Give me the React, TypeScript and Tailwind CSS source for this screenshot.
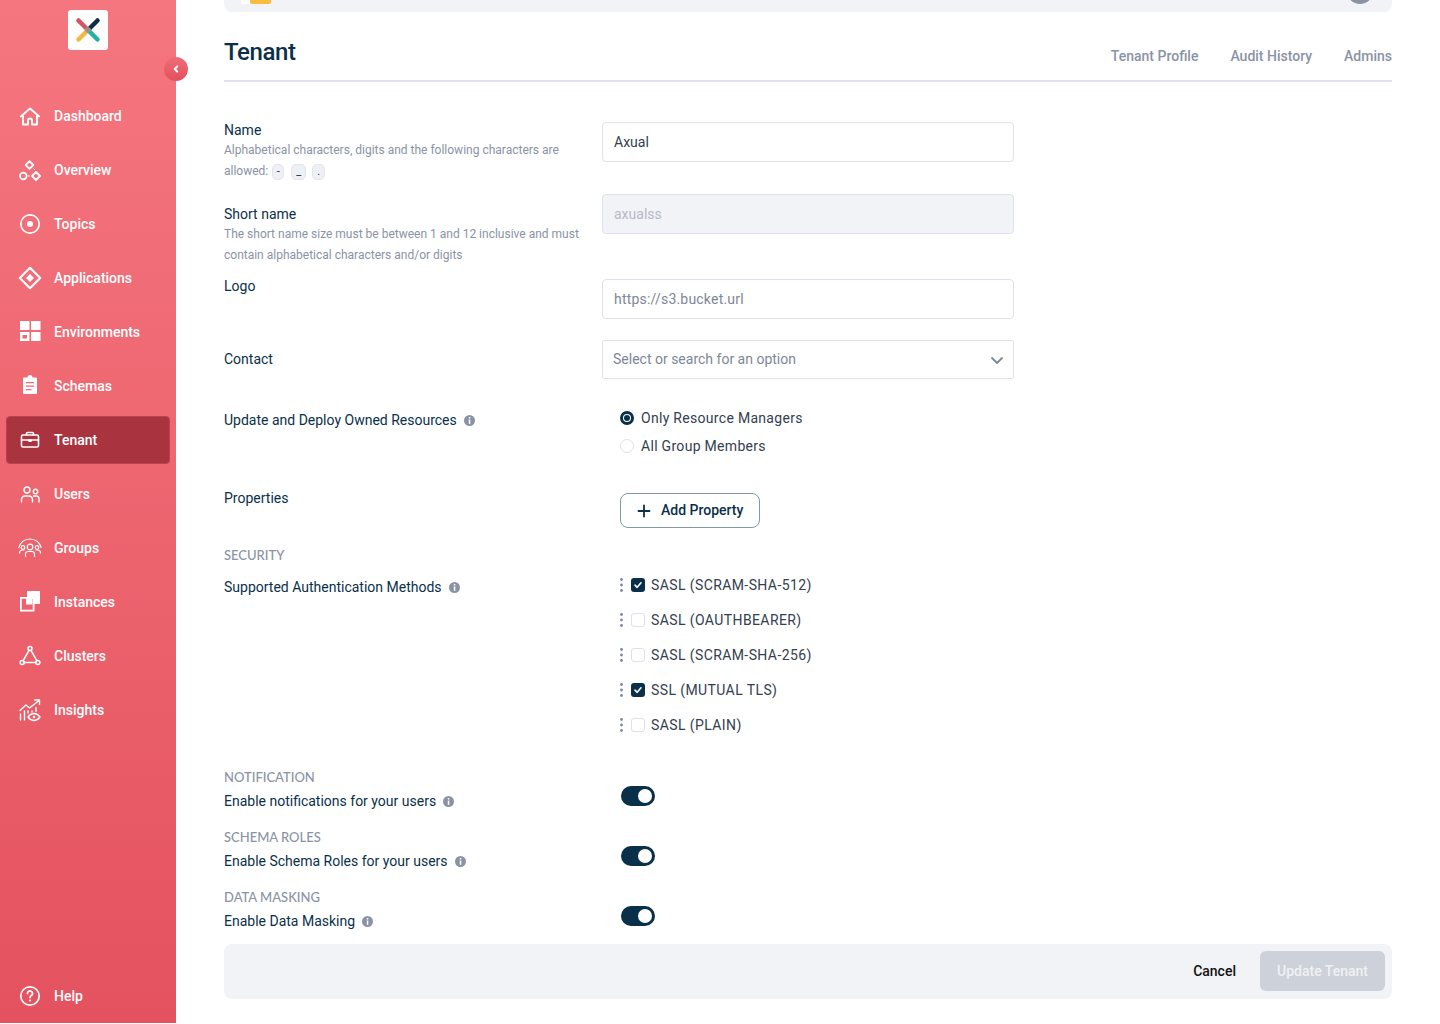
import { ReactNode } from "react"

const Ic = ({ children }: { children: ReactNode }) => (
  <svg width="24" height="24" viewBox="0 0 24 24" fill="none" stroke="white" strokeWidth="1.6" strokeLinecap="round" strokeLinejoin="round">
    {children}
  </svg>
)

const navItems: { label: string; active?: boolean; icon: ReactNode }[] = [
  { label: "Dashboard", icon: <Ic><path strokeWidth="1.900" d="M2.800 12.500 12 4.500l9.200 8M5 11.500V20.500h5V16.500a2 2 0 0 1 4 0v4h5V11.500" /></Ic> },
  { label: "Overview", icon: <Ic><path strokeWidth="1.800" d="M11.500 3.200 15.300 7 11.500 10.800 7.700 7Z" /><circle strokeWidth="1.800" cx="5.300" cy="18" r="3.300" /><path strokeWidth="1.800" d="M18 14 22 18 18 22 14 18Z" /><path d="M10.300 18h1M15.800 10.800l.6.600" strokeWidth="1" /></Ic> },
  { label: "Topics", icon: <Ic><circle cx="12" cy="12" r="9.200" strokeWidth="1.700" /><circle cx="12" cy="12" r="3" fill="white" stroke="none" /></Ic> },
  { label: "Applications", icon: <Ic><path d="M12 1.800 22.200 12 12 22.200 1.800 12Z" strokeWidth="2.200" /><path d="M12 8 16 12 12 16 8 12Z" fill="white" stroke="none" /></Ic> },
  { label: "Environments", icon: <svg width="24" height="24" viewBox="0 0 24 24" fill="white"><rect x="2" y="1" width="9.500" height="9" /><rect x="13" y="1" width="9.500" height="9" /><path fillRule="evenodd" d="M2 12h9.500v9H2Zm2.500 3v3.500h4.500V15Z" /><rect x="13" y="12" width="9.500" height="9" /></svg> },
  { label: "Schemas", icon: <svg width="24" height="24" viewBox="0 0 24 24" fill="white"><path fillRule="evenodd" d="M9.500 3.500a2.500 2.500 0 0 1 5 0H18a1 1 0 0 1 1 1V19a1 1 0 0 1-1 1H6a1 1 0 0 1-1-1V4.500a1 1 0 0 1 1-1ZM8 8v1.300h8V8Zm0 3.500v1.300h8v-1.300Zm0 3.500v1.300h5.500V15Z" /></svg> },
  { label: "Tenant", active: true, icon: <Ic><rect x="3.500" y="7" width="17" height="12" rx="1.500" /><path d="M8.500 7V5.500a1 1 0 0 1 1-1h5a1 1 0 0 1 1 1V7M3.500 12h17" /><path d="M11 12h2v1.200h-2z" fill="white" /></Ic> },
  { label: "Users", icon: <Ic><circle cx="9" cy="8" r="3" strokeWidth="1.400" /><circle cx="17.500" cy="9.500" r="2.200" strokeWidth="1.400" /><path d="M3.500 20v-2.500a3.500 3.500 0 0 1 3.500-3.500h4a3.500 3.500 0 0 1 3.500 3.500V20M15.500 14h3a2.500 2.500 0 0 1 2.500 2.500V20" strokeWidth="1.400" /></Ic> },
  { label: "Groups", icon: <svg width="24" height="24" viewBox="0 0 24 24" fill="none" stroke="white" strokeWidth="1.200" strokeLinecap="round"><path d="M1 11.500C2 6.500 6.500 3 12 3s10 3.500 11 8.500" /><circle cx="12" cy="11" r="2.800" /><circle cx="5" cy="11.500" r="1.800" /><circle cx="19" cy="11.500" r="1.800" /><path d="M7.500 20.500V18a2.500 2.500 0 0 1 2.500-2.500h4a2.500 2.500 0 0 1 2.500 2.500v2.500M1.500 17a3 3 0 0 1 3-3h1.500M22.500 17a3 3 0 0 0-3-3H18" /></svg> },
  { label: "Instances", icon: <svg width="24" height="24" viewBox="0 0 24 24" fill="white"><path fillRule="evenodd" d="M9 1h13v13h-6.500V9H9Z" /><path fillRule="evenodd" d="M2 7h14.500v14.500H2Zm1.700 1.700v11h11v-11Z" /><rect x="8" y="8.500" width="6.500" height="6" /></svg> },
  { label: "Clusters", icon: <Ic><circle cx="12" cy="4.500" r="2" /><circle cx="4.200" cy="18.500" r="2" /><circle cx="19.800" cy="18.500" r="2" /><path d="M11 6.300 5.200 16.700M13 6.300l5.800 10.400M6.200 18.500h11.600" /></Ic> },
  { label: "Insights", icon: <svg width="24" height="24" viewBox="0 0 24 24" fill="none" stroke="white" strokeWidth="1.400" strokeLinecap="round" strokeLinejoin="round"><path d="M2 12.500 8 7l3.500 3L21 2.500M16.500 2H21.500V6.500" /><path d="M2.500 22v-6M6.500 22v-9M10 13v2M14 13v1M18 9.500v4" /><path d="M10 19c1.700-2.400 3.800-3.500 6-3.500s4.300 1.100 6 3.500c-1.700 2.400-3.800 3.500-6 3.500s-4.300-1.100-6-3.500Z" /><circle cx="16" cy="19" r="1.300" fill="white" stroke="none" /></svg> },
]

function Info() {
  return (
    <svg width="11" height="11" viewBox="0 0 11 11" className="ml-[7px] inline-block shrink-0">
      <circle cx="5.500" cy="5.500" r="5.500" fill="#8a93a6" />
      <rect x="4.800" y="2" width="1.500" height="1.500" fill="white" />
      <rect x="4.800" y="4.500" width="1.500" height="4.300" fill="white" />
    </svg>
  )
}

function Key({ c, className }: { c: string; className: string }) {
  return <span className={`flex h-[16px] items-center justify-center rounded-[5px] border border-[#e3e5ee] bg-[#eef0f5] text-[11px] leading-none text-[#0a3049] ${className}`}>{c}</span>
}

function AuthRow({ label, on }: { label: string; on?: boolean }) {
  return (
    <div className="flex h-[35px] items-center pl-[18px]">
      <svg width="3" height="14" viewBox="0 0 3 14" className="mb-[1px] mr-[8px]" fill="#7c87a0">
        <circle cx="1.500" cy="1.500" r="1.400" />
        <circle cx="1.500" cy="7" r="1.400" />
        <circle cx="1.500" cy="12.500" r="1.400" />
      </svg>
      {on ? (
        <span className="mb-[1px] flex h-[14px] w-[14px] items-center justify-center rounded-[3px] bg-[#0a3049]">
          <svg width="10" height="10" viewBox="0 0 10 10" fill="none" stroke="white" strokeWidth="1.600" strokeLinecap="round" strokeLinejoin="round"><path d="M2 5.200 4.200 7.300 8 2.800" /></svg>
        </span>
      ) : (
        <span className="mb-[1px] h-[14px] w-[14px] rounded-[3px] border border-[#dfe1ea] bg-white" />
      )}
      <span className="ml-[6px] tracking-[0.4px] text-[#33404f]">{label}</span>
    </div>
  )
}

function ToggleRow({ section, label }: { section: string; label: string }) {
  return (
    <div className="flex h-[60px] items-start">
      <div className="w-[397px]">
        <div className="h-[20px] pt-[1px] font-['Lato'] text-[13px] font-medium leading-[18px] text-[#8a93a6]">{section}</div>
        <div className="mt-[4px] flex h-[20px] items-center text-[#0a3049]">{label}<Info /></div>
      </div>
      <div className="mt-[19px] flex h-[20px] w-[34px] items-center justify-end rounded-full bg-[#0a3049] pr-[3px]">
        <span className="h-[14px] w-[14px] rounded-full bg-white" />
      </div>
    </div>
  )
}

export default function App() {
  return (
    <div className="flex h-[1023px] overflow-hidden bg-white font-['Roboto',sans-serif] text-[14px]">
      <aside className="relative flex w-[176px] shrink-0 flex-col bg-gradient-to-b from-[#f5767f] to-[#e4525f] text-white">
        <div className="ml-[68px] mt-[10px] flex h-[40px] w-[40px] items-center justify-center rounded-[3px] bg-white">
          <svg width="26" height="26" viewBox="0 0 26 26" strokeWidth="4.500" strokeLinecap="round">
            <path d="M3.500 3.500 13 13" stroke="#d4545f" />
            <path d="M22.500 3.500 13 13" stroke="#0a3049" />
            <path d="M3.500 22.500 13 13" stroke="#f5b942" />
            <path d="M22.500 22.500 13 13" stroke="#23b3a3" />
            <circle cx="13" cy="13" r="2.800" fill="#9a9488" stroke="none" />
          </svg>
        </div>
        <button className="absolute left-[164px] top-[57px] flex h-[24px] w-[24px] items-center justify-center rounded-full bg-gradient-to-b from-[#ee6d78] to-[#e44f5d]">
          <svg width="10" height="10" viewBox="0 0 10 10" fill="none" stroke="white" strokeWidth="2" strokeLinecap="round" strokeLinejoin="round"><path d="M6.200 2.500 3.700 5l2.500 2.500" /></svg>
        </button>
        <nav className="mt-[42px] flex flex-col gap-[6px] px-[6px]">
          {navItems.map((item) => (
            <a key={item.label} className={`flex h-[48px] items-center gap-[12px] rounded-[4px] font-medium ${item.active ? "border border-[#b9444f] bg-[#a9333f] pl-[11px]" : "pl-[12px]"}`}>
              {item.icon}
              <span>{item.label}</span>
            </a>
          ))}
        </nav>
        <a className="mt-auto mb-[3px] flex h-[48px] items-center gap-[12px] pl-[18px] font-medium">
          <Ic>
            <circle cx="12" cy="12" r="9.200" strokeWidth="1.700" />
            <path d="M9.500 9.500a2.500 2.500 0 1 1 3.800 2.100c-.8.500-1.300 1-1.300 2" strokeWidth="1.800" />
            <circle cx="12" cy="16.500" r="1" fill="white" stroke="none" />
          </Ic>
          <span>Help</span>
        </a>
      </aside>

      <main className="flex min-w-0 flex-1 flex-col pl-[48px] pr-[48px]">
        <div className="flex h-[12px] shrink-0 items-end justify-between overflow-hidden rounded-b-[8px] bg-[#f2f3f7] pl-[17px] pr-[19px]">
          <div className="mb-[8px] flex h-[20px] shrink-0">
            <span className="w-[9px] bg-white" />
            <span className="w-[21px] rounded-b-[2px] bg-[#f9bd3d]" />
          </div>
          <span className="mb-[8px] h-[26px] w-[26px] shrink-0 rounded-full bg-[#8a93a6]" />
        </div>

        <header className="flex h-[70px] shrink-0 items-center justify-between border-b-2 border-[#dfe1f0]">
          <h1 className="pt-[11px] text-[24px] font-medium tracking-[-0.4px] text-[#0a3049]">Tenant</h1>
          <div className="flex gap-[32px] pt-[20px] font-medium text-[#8a93a6]">
            <span>Tenant Profile</span>
            <span>Audit History</span>
            <span>Admins</span>
          </div>
        </header>

        <div className="mt-[40px] flex h-[72px] shrink-0 items-start">
          <div className="w-[378px] text-[#0a3049]">
            <div className="h-[16px] leading-[16px]">Name</div>
            <div className="mt-[2px] text-[12px] leading-[21px] text-[#8a93a6]">
              <div>Alphabetical characters, digits and the following characters are</div>
              <div className="flex h-[21px] items-center">
                <span>allowed:</span>
                <Key c="-" className="ml-[4px] w-[12px]" />
                <Key c="_" className="ml-[7px] w-[15px]" />
                <Key c="." className="ml-[6px] w-[13px]" />
              </div>
            </div>
          </div>
          <input readOnly defaultValue="Axual" className="h-[40px] w-[412px] rounded-[4px] border border-[#dfe1f0] px-[11px] text-[#33404f] outline-none" />
        </div>

        <div className="flex h-[85px] shrink-0 items-start">
          <div className="w-[378px] pt-[12px] text-[#0a3049]">
            <div className="h-[16px] leading-[16px]">Short name</div>
            <p className="mt-[2px] w-[360px] text-[12px] leading-[21px] text-[#8a93a6]">
              The short name size must be between 1 and 12 inclusive and must contain alphabetical characters and/or digits
            </p>
          </div>
          <input disabled defaultValue="axualss" className="h-[40px] w-[412px] rounded-[4px] border border-[#dfe1f0] bg-[#f2f3f7] px-[11px] text-[#b5bac6] outline-none" />
        </div>

        <div className="flex h-[61px] shrink-0 items-start">
          <div className="w-[378px] leading-[14px] text-[#0a3049]">Logo</div>
          <input readOnly placeholder="https://s3.bucket.url" className="h-[40px] w-[412px] rounded-[4px] border border-[#dfe1f0] px-[11px] tracking-[0.2px] text-[#33404f] outline-none placeholder:text-[#7d8797]" />
        </div>

        <div className="flex h-[61px] shrink-0 items-start">
          <div className="flex h-[39px] w-[378px] items-center text-[#0a3049]">Contact</div>
          <div className="flex h-[39px] w-[412px] items-center justify-between rounded-[2px] border border-[#dfe1f0] pl-[10px] pr-[9px] text-[#7d8797]">
            <span>Select or search for an option</span>
            <svg width="14" height="14" viewBox="0 0 14 14" fill="none" stroke="#7d8797" strokeWidth="1.800" strokeLinecap="round" strokeLinejoin="round"><path d="M2 5l5 5 5-5" /></svg>
          </div>
        </div>

        <div className="flex h-[77px] shrink-0 items-start">
          <div className="flex h-[38px] w-[396px] items-center text-[#0a3049]">Update and Deploy Owned Resources<Info /></div>
          <div className="mt-[2px] flex flex-col tracking-[0.3px] text-[#33404f]">
            <div className="flex h-[28px] items-center gap-[7px] pt-[2px]">
              <span className="flex h-[14px] w-[14px] items-center justify-center rounded-full border-[3px] border-[#0a3049] bg-white">
                <span className="h-[6px] w-[6px] rounded-full bg-[#0a3049]" />
              </span>
              Only Resource Managers
            </div>
            <div className="flex h-[28px] items-center gap-[7px] pt-[2px]">
              <span className="h-[14px] w-[14px] rounded-full border border-[#dfe1ea] bg-white" />
              All Group Members
            </div>
          </div>
        </div>

        <div className="flex h-[68px] shrink-0 items-start">
          <div className="w-[396px] pt-[8px] leading-[24px] text-[#0a3049]">Properties</div>
          <button className="mt-[15px] flex h-[35px] w-[140px] items-center gap-[10px] rounded-[8px] border-[1.5px] border-[#7f99a8] pl-[16px] font-medium text-[#0a3049]">
            <svg width="14" height="14" viewBox="0 0 14 14" stroke="#0a3049" strokeWidth="1.800" strokeLinecap="round"><path d="M7 1.500v11M1.500 7h11" /></svg>
            Add Property
          </button>
        </div>

        <div className="h-[19px] shrink-0 font-['Lato'] text-[13px] font-medium leading-[18px] text-[#8a93a6]">SECURITY</div>
        <div className="flex h-[202px] shrink-0 items-start pt-[3px]">
          <div className="flex h-[35px] w-[378px] items-center pt-[3px] text-[#0a3049]">Supported Authentication Methods<Info /></div>
          <div className="flex flex-col">
            <AuthRow label="SASL (SCRAM-SHA-512)" on />
            <AuthRow label="SASL (OAUTHBEARER)" />
            <AuthRow label="SASL (SCRAM-SHA-256)" />
            <AuthRow label="SSL (MUTUAL TLS)" on />
            <AuthRow label="SASL (PLAIN)" />
          </div>
        </div>

        <ToggleRow section="NOTIFICATION" label="Enable notifications for your users" />
        <ToggleRow section="SCHEMA ROLES" label="Enable Schema Roles for your users" />
        <div className="h-[57px] shrink-0 overflow-hidden">
          <ToggleRow section="DATA MASKING" label="Enable Data Masking" />
        </div>

        <footer className="flex h-[55px] shrink-0 items-center justify-end rounded-[8px] bg-[#f2f3f7] pr-[7px]">
          <span className="font-medium text-[#111]">Cancel</span>
          <button className="ml-[24px] mt-[-1px] h-[40px] w-[125px] rounded-[6px] bg-[#cdd1d9] font-medium text-[#eff1f4]">Update Tenant</button>
        </footer>
      </main>
    </div>
  )
}
